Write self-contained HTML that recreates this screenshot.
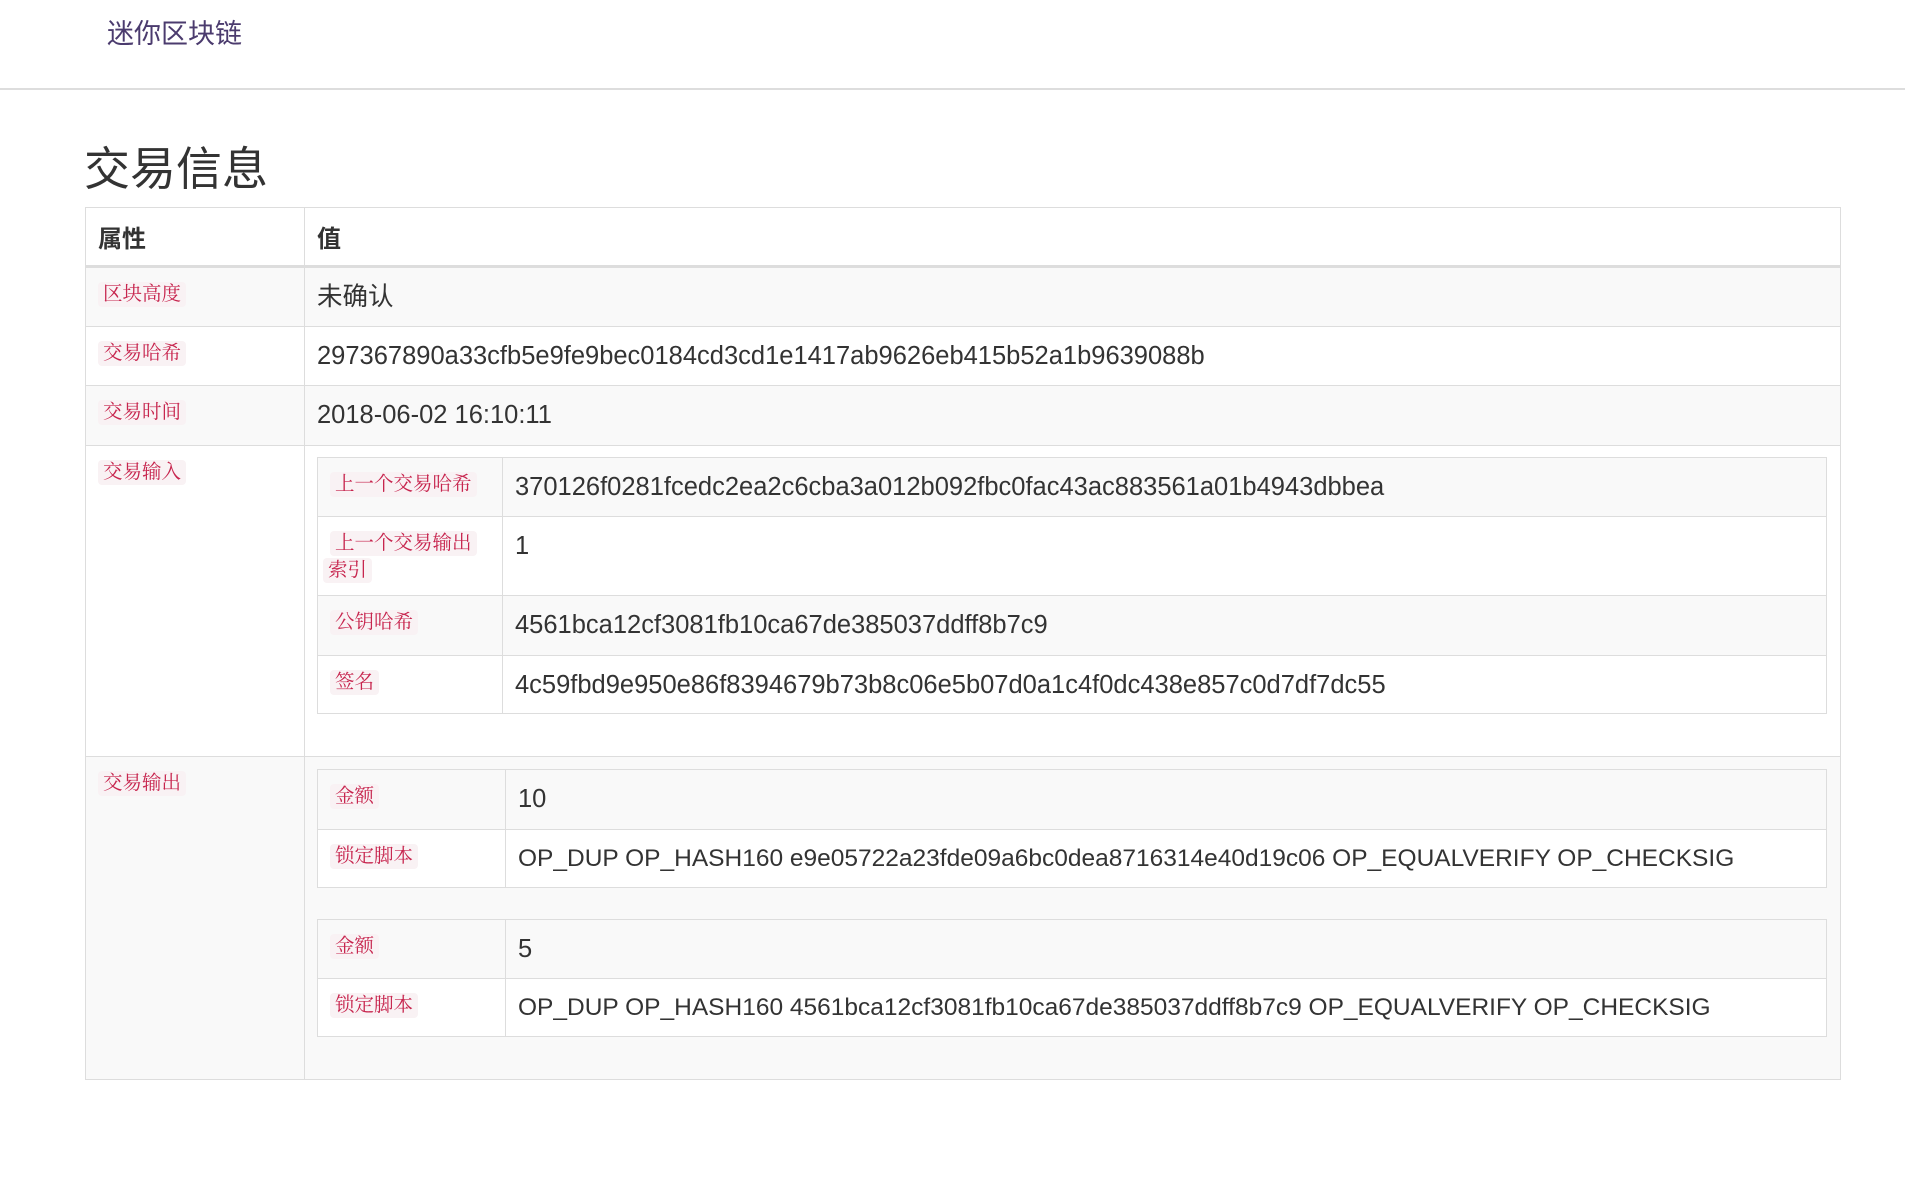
<!DOCTYPE html>
<html><head><meta charset="utf-8"><style>
body{margin:0;background:#fff;font-family:"Liberation Sans","Noto Sans CJK SC",sans-serif;color:#333;}
.nav{height:88px;border-bottom:2px solid #ddd;position:relative}
.brand{position:absolute;left:107px;top:12px;font-size:27px;color:#4b3b6e}
h1{position:absolute;left:84px;top:139px;margin:0;font-weight:normal;font-size:46px;color:#333;line-height:60px}
table{border-collapse:collapse;table-layout:fixed}
.main{position:absolute;left:85px;top:207px;width:1756px}
td,th{border:1px solid #ddd;vertical-align:top;text-align:left;padding:0 12px}
th{font-weight:bold;font-size:24px;height:57px;vertical-align:middle;border-bottom:3px solid #ddd}
.s{background:#f9f9f9}
code{font-family:"Liberation Serif","Noto Serif CJK SC",serif;font-size:19.5px;color:#c7254e;background:#f9f2f4;padding:2px 5px;border-radius:4px;line-height:27px}
.v{font-size:25.5px;padding-top:14px;line-height:30px}
.op{font-size:24.5px}
.lab{padding-top:13px;padding-left:12px;padding-right:8px}
.inner{width:1510px;margin:11px 0}
</style></head><body>
<div class="nav"><div class="brand">迷你区块链</div></div>
<h1>交易信息</h1>
<table class="main">
<colgroup><col style="width:219px"><col></colgroup>
<tr><th>属性</th><th>值</th></tr>
<tr class="s" style="height:60px"><td class="lab"><code>区块高度</code></td><td class="v">未确认</td></tr>
<tr style="height:59px"><td class="lab"><code>交易哈希</code></td><td class="v">297367890a33cfb5e9fe9bec0184cd3cd1e1417ab9626eb415b52a1b9639088b</td></tr>
<tr class="s" style="height:60px"><td class="lab"><code>交易时间</code></td><td class="v">2018-06-02 16:10:11</td></tr>
<tr style="height:311px"><td class="lab"><code>交易输入</code></td><td style="padding:0 12px">
<table class="inner"><colgroup><col style="width:185px"><col></colgroup>
<tr class="s" style="height:59px"><td class="lab"><code>上一个交易哈希</code></td><td class="v">370126f0281fcedc2ea2c6cba3a012b092fbc0fac43ac883561a01b4943dbbea</td></tr>
<tr style="height:79px"><td class="lab"><code>上一个交易输出</code><br><code style="margin-left:-7px">索引</code></td><td class="v">1</td></tr>
<tr class="s" style="height:60px"><td class="lab"><code>公钥哈希</code></td><td class="v">4561bca12cf3081fb10ca67de385037ddff8b7c9</td></tr>
<tr style="height:58px"><td class="lab"><code>签名</code></td><td class="v">4c59fbd9e950e86f8394679b73b8c06e5b07d0a1c4f0dc438e857c0d7df7dc55</td></tr>
</table></td></tr>
<tr class="s" style="height:323px"><td class="lab"><code>交易输出</code></td><td style="padding:0 12px">
<table class="inner" style="margin-top:12px"><colgroup><col style="width:188px"><col></colgroup>
<tr class="s" style="height:60px"><td class="lab"><code>金额</code></td><td class="v">10</td></tr>
<tr style="background:#fff;height:58px"><td class="lab"><code>锁定脚本</code></td><td class="v op">OP_DUP OP_HASH160 e9e05722a23fde09a6bc0dea8716314e40d19c06 OP_EQUALVERIFY OP_CHECKSIG</td></tr>
</table>
<table class="inner" style="margin-top:31px"><colgroup><col style="width:188px"><col></colgroup>
<tr class="s" style="height:59px"><td class="lab"><code>金额</code></td><td class="v">5</td></tr>
<tr style="background:#fff;height:58px"><td class="lab"><code>锁定脚本</code></td><td class="v op">OP_DUP OP_HASH160 4561bca12cf3081fb10ca67de385037ddff8b7c9 OP_EQUALVERIFY OP_CHECKSIG</td></tr>
</table></td></tr>
</table>
</body></html>
